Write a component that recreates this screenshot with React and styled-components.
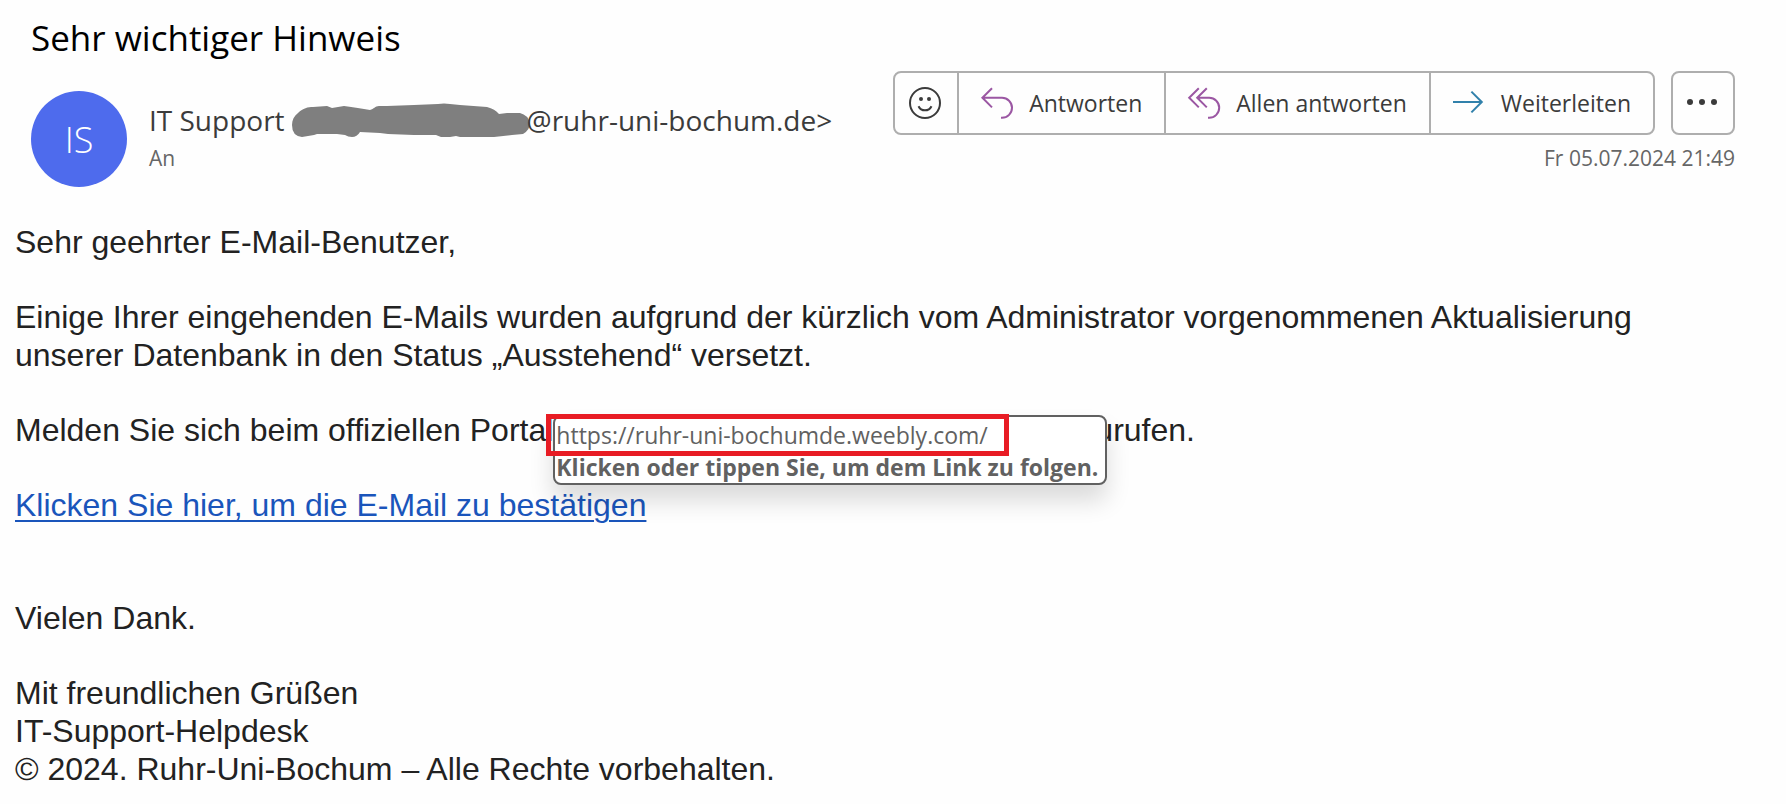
import styled, { createGlobalStyle } from 'styled-components';

const App = () => {
  return (
    <>
      <GlobalStyle />
      <StyledMail>
        <MailHeader />
        <MailBody />
      </StyledMail>
    </>
  );
};

const MailHeader = () => {
  return (
    <StyledHeader>
      <Subject>Sehr wichtiger Hinweis</Subject>
      <HeaderRow>
        <Avatar>IS</Avatar>
        <Sender>
          <SenderName>
            <span>IT Support</span>
            <Scribble />
            <span>@ruhr-uni-bochum.de&gt;</span>
          </SenderName>
          <Meta>An</Meta>
        </Sender>
        <Actions>
          <Toolbar>
            <ButtonGroup>
              <IconButton type='button' aria-label='Reagieren'>
                <SmileIcon />
              </IconButton>
              <ActionButton type='button'>
                <ReplyIcon />
                Antworten
              </ActionButton>
              <ActionButton type='button'>
                <ReplyAllIcon />
                Allen antworten
              </ActionButton>
              <ActionButton type='button'>
                <ForwardIcon />
                Weiterleiten
              </ActionButton>
            </ButtonGroup>
            <ButtonGroup>
              <IconButton type='button' aria-label='Weitere Aktionen'>
                <DotsIcon />
              </IconButton>
            </ButtonGroup>
          </Toolbar>
          <Meta as='time' dateTime='2024-07-05T21:49'>
            Fr 05.07.2024 21:49
          </Meta>
        </Actions>
      </HeaderRow>
    </StyledHeader>
  );
};

const MailBody = () => {
  return (
    <StyledBody>
      <p>Sehr geehrter E-Mail-Benutzer,</p>
      <p>
        Einige Ihrer eingehenden E-Mails wurden aufgrund der kürzlich vom
        Administrator vorgenommenen Aktualisierung unserer Datenbank in den
        Status „Ausstehend“ versetzt.
      </p>
      <p>
        Melden Sie sich beim offiziellen Portal
        <TooltipAnchor>
          <Tooltip role='tooltip'>
            <span>https://ruhr-uni-bochumde.weebly.com/</span>
            <strong>Klicken oder tippen Sie, um dem Link zu folgen.</strong>
            <Highlight />
          </Tooltip>
        </TooltipAnchor>
        urufen.
      </p>
      <p>
        <a href='https://ruhr-uni-bochumde.weebly.com/'>
          Klicken Sie hier, um die E-Mail zu bestätigen
        </a>
      </p>
      <Closing>Vielen Dank.</Closing>
      <p>
        Mit freundlichen Grüßen
        <br />
        IT-Support-Helpdesk
        <br />© 2024. Ruhr-Uni-Bochum – Alle Rechte vorbehalten.
      </p>
    </StyledBody>
  );
};

// icons
const SmileIcon = () => (
  <Icon viewBox='0 0 32 32' $color='#3b3b3b'>
    <circle cx='15' cy='16' r='15' />
    <path d='M8.5 19.2a7.2 7.2 0 0 0 13 0' />
    <circle cx='11' cy='12' r='2' fill='#3b3b3b' stroke='none' />
    <circle cx='19' cy='12' r='2' fill='#3b3b3b' stroke='none' />
  </Icon>
);

const ReplyIcon = () => (
  <Icon viewBox='0 0 32 32' $color='#9b57a3'>
    <path d='M11 1.2 1.4 10.8 11 20.4M1.4 10.8H21a10 10 0 0 1 0 20h-1' />
  </Icon>
);

const ReplyAllIcon = () => (
  <Icon viewBox='0 0 32 32' $color='#9b57a3'>
    <path d='M10.8 1.2 1.2 10.8 10.8 20.4M18.8 1.2 9.2 10.8l9.6 9.6M9.2 10.8h12a10 10 0 0 1 0 20H20' />
  </Icon>
);

const ForwardIcon = () => (
  <Icon viewBox='0 0 32 32' $color='#3181ab'>
    <path d='M0 15h29M18.4 4.6 28.8 15 18.4 25.4' />
  </Icon>
);

const DotsIcon = () => (
  <Icon viewBox='0 0 32 32' $color='none'>
    <g fill='#3b3b3b'>
      <circle cx='3' cy='15' r='3' />
      <circle cx='15' cy='15' r='3' />
      <circle cx='27' cy='15' r='3' />
    </g>
  </Icon>
);

const Scribble = () => (
  <ScribbleSvg viewBox='0 0 238 34' aria-hidden='true'>
    <path d='M0 22C0 17 2 13 6 10C11 5 16 4 21 4L35 3L40 5L52 3C62 4 70 6 78 7C82 6 83 3 87 3L95 3L122 2L146 1Q152 0 158 1L168 2L195 4Q203 6 207 11L215 10L228 10Q236 12 238 20Q238 27 231 31L220 32L202 34H168L164 33L158 34H149L144 32H122L96 31L88 30L68 29Q65 34 60 34Q56 34 53 32L45 31L25 31L22 32L10 34Q0 33 0 22Z' />
  </ScribbleSvg>
);

// Styling
const GlobalStyle = createGlobalStyle`
  * {
    box-sizing: border-box;
  }
  body {
    margin: 0;
    background: #fefefe;
  }
`;

const StyledMail = styled.main`
  font-family: 'Open Sans', 'Noto Sans', sans-serif;
  color: #3b3b3b;
`;

const StyledHeader = styled.header`
  padding: 15px 51px 0 31px;
`;

const Subject = styled.h1`
  margin: 0;
  font-size: 35px;
  font-weight: 400;
  line-height: 46px;
  color: #000;
`;

const HeaderRow = styled.div`
  display: flex;
  align-items: flex-start;
  padding-top: 10px;
`;

const Avatar = styled.div`
  display: flex;
  align-items: center;
  justify-content: center;
  flex: none;
  width: 96px;
  height: 96px;
  margin-top: 20px;
  border-radius: 50%;
  background: #4e6bed;
  color: #fff;
  font-size: 36px;
  font-weight: 300;
`;

const Sender = styled.div`
  flex: 1;
  margin: 29px 0 0 22px;
`;

const SenderName = styled.div`
  display: flex;
  align-items: center;
  padding-bottom: 2px;
  font-size: 28px;
  line-height: 40px;
  white-space: nowrap;
`;

const ScribbleSvg = styled.svg`
  width: 238px;
  height: 34px;
  margin: 0 -3px 0 7px;
  fill: #7f7f7f;
`;

const Meta = styled.div`
  font-size: 21px;
  line-height: 32px;
  color: #666;
`;

const Actions = styled.div`
  display: flex;
  flex-direction: column;
  align-items: flex-end;
  gap: 7px;
`;

const Toolbar = styled.div`
  display: flex;
  gap: 16px;
`;

const ButtonGroup = styled.div`
  display: flex;
  height: 64px;
  border: 2px solid #aeaeae;
  border-radius: 8px;
`;

const ActionButton = styled.button`
  display: flex;
  align-items: center;
  gap: 16px;
  padding: 0 22px;
  border: 0;
  background: none;
  color: inherit;
  font-family: inherit;
  font-size: 23px;
  line-height: 32px;
  white-space: nowrap;
  cursor: pointer;

  & + & {
    border-left: 2px solid #aeaeae;
  }
`;

const IconButton = styled(ActionButton)`
  padding: 0 14px;

  &:not(:only-child) {
    padding: 0 15px;
  }
  & + ${ActionButton} {
    border-left: 2px solid #aeaeae;
  }
`;

const Icon = styled.svg`
  flex: none;
  width: 32px;
  height: 32px;
  overflow: visible;
  fill: none;
  stroke: ${(props) => props.$color};
  stroke-width: 2;
`;

const StyledBody = styled.section`
  padding: 36px 15px 0;
  max-width: 1700px;
  font-family: 'Liberation Sans', Arial, sans-serif;
  font-size: 32px;
  line-height: 38px;
  color: #222;

  p {
    margin: 0 0 37px;
  }
  a {
    color: #1a55bb;
    text-decoration-thickness: 2px;
    text-underline-offset: 4px;
  }
`;

const Closing = styled.p`
  padding-top: 38px;
`;

const TooltipAnchor = styled.span`
  position: relative;
  display: inline-block;
  width: 542px;
  height: 38px;
  vertical-align: bottom;
`;

const Tooltip = styled.span`
  position: absolute;
  top: 4px;
  left: 0;
  display: flex;
  flex-direction: column;
  padding: 2px 1px 0;
  width: 554px;
  height: 70px;
  border: 2px solid #616161;
  border-radius: 8px;
  background: #fff;
  box-shadow: 0 16px 24px rgba(0, 0, 0, 0.14);
  color: #616161;
  font-family: 'Open Sans', 'Noto Sans', sans-serif;
  font-size: 23px;
  line-height: 32px;
  white-space: nowrap;
`;

// red frame around the link target
const Highlight = styled.span`
  position: absolute;
  top: -3px;
  left: -9px;
  width: 463px;
  height: 42px;
  border: 5px solid #e81c24;
`;

export default App;
